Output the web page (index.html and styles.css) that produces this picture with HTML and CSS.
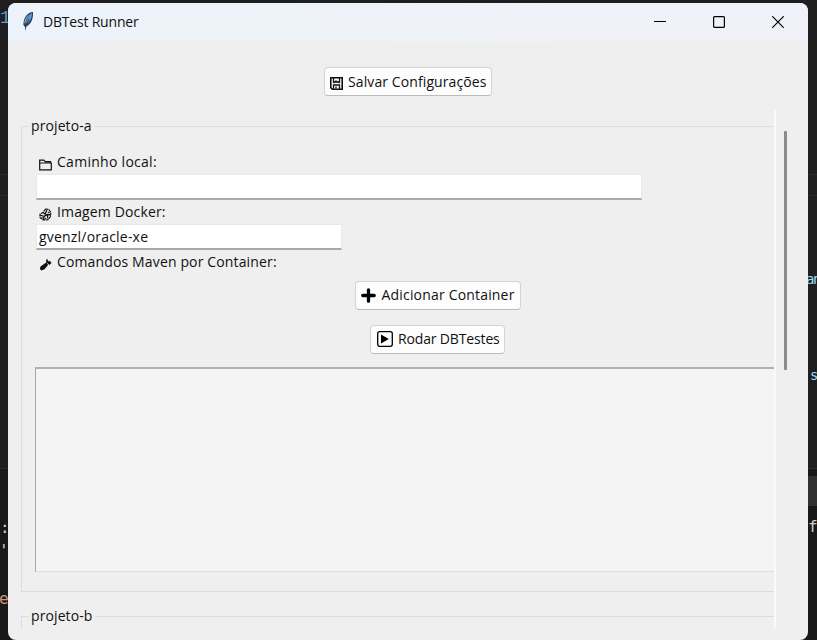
FILE: index.html
```html
<!DOCTYPE html>
<html lang="pt-BR">
<head>
<meta charset="utf-8">
<title>DBTest Runner</title>
<link rel="stylesheet" href="styles.css">
</head>
<body>
<div class="desktop">
  <div class="editor">
    <div class="band band-upper"></div>
    <div class="band band-input"></div>
    <span class="code code-one">1</span>
    <span class="code code-colon">:</span>
    <span class="code code-quote">'</span>
    <span class="code code-e">e</span>
    <span class="code code-an">an</span>
    <span class="code code-s">s</span>
    <span class="code code-f">f</span>
  </div>
  <main class="window">
    <header class="titlebar">
      <svg class="feather" width="12" height="21" viewBox="0 0 12 21"><path d="M11 1C6 1 1.500 6 1.400 14L3 16L3.400 20L4.400 15.500C9 13 11.500 8 11 1Z" fill="#343c48"/><path d="M10 2C6.500 4 4.200 8 3.500 13.800C7.800 11 10.200 7 10 2Z" fill="#5596e6"/><path d="M7.500 3C4 5 2.300 9 2.300 13L3.800 11C4 8 5.500 5.500 7.500 3Z" fill="#9aa7b5"/><path d="M7 8L4 14" stroke="#1d3c63" stroke-width="1"/></svg>
      <h1 class="title">DBTest Runner</h1>
      <div class="controls">
        <svg width="12" height="12" viewBox="0 0 12 12"><path d="M0 5.500H12" stroke="#000"/></svg>
        <svg width="12" height="12" viewBox="0 0 12 12"><rect x=".6" y=".6" width="10.800" height="10.800" rx="1" fill="none" stroke="#000" stroke-width="1.200"/></svg>
        <svg width="12" height="12" viewBox="0 0 12 12"><path d="M.3.3L11.700 11.700M11.700.3L.3 11.700" stroke="#000" stroke-width="1.200"/></svg>
      </div>
    </header>
    <div class="toolbar">
      <button class="button save"><svg width="13" height="13" viewBox="0 0 13 13"><path d="M1 .8H12.200V12.200H2.300L.8 10.700V.8Z" fill="none" stroke="#111" stroke-width="1.600"/><path d="M3.500 1V5H9.500V1M3.500 12V8H9.500V12M6 9.500V11.500M3.500 6L6 4L9.500 6" fill="none" stroke="#111" stroke-width="1.300"/></svg><span>Salvar Configurações</span></button>
    </div>
    <div class="content">
      <div class="viewport">
        <section class="group">
          <h2 class="legend legend-a">projeto-a</h2>
          <div class="label path"><svg width="13" height="13" viewBox="0 0 13 13"><path d="M.7 11.800V2.200H4.800L6.300 3.700H11.500V5M.7 5H12.300V11.800H.7Z" fill="none" stroke="#111" stroke-width="1.200"/></svg><span>Caminho local:</span></div>
          <div class="field wide"></div>
          <div class="label docker"><svg width="13" height="13" viewBox="0 0 13 13"><path d="M6.500 1L9.500 1.200L11.800 4L11.500 8.500L9 11.800L4 12L1 9.500L1 6L4 4.500Z" fill="none" stroke="#111" stroke-width="1.100" stroke-dasharray="3 .6"/><path d="M1 7L5 8.500L4.500 11.800M5 8.500L8 6.500L11.800 7M4 4.500L6 6L8 2M8 6.500L9 10.500M2.500 9.500L3.500 10.500M9 4L10.500 5M6 10L7 11" fill="none" stroke="#111" stroke-width="1.300"/></svg><span>Imagem Docker:</span></div>
          <div class="field narrow"><span>gvenzl/oracle-xe</span></div>
          <div class="label maven"><svg width="13" height="13" viewBox="0 0 13 13"><path d="M8 .8L9.300 3.300L11 3L12.500 5L10.500 7L9.500 6.500L5.500 11.300L2.500 12.600L.8 11L1.500 8.500L7.500 4.300L7 2.300Z" fill="#111"/><path d="M8 5.300L10 7" stroke="#eee" stroke-width=".8"/></svg><span>Comandos Maven por Container:</span></div>
          <div class="actions">
            <button class="button add"><svg width="16" height="15" viewBox="0 0 16 15"><path d="M8.500 1.800V13.200M2.800 7.500H14.200" stroke="#000" stroke-width="3.300" stroke-linecap="round"/></svg><span>Adicionar Container</span></button>
            <button class="button run"><svg width="16" height="16" viewBox="0 0 16 16"><rect x=".7" y=".7" width="14.600" height="14.600" rx="2" fill="none" stroke="#000" stroke-width="1.300"/><path d="M4 3.500L11.800 8L4 12.500Z" fill="#000"/></svg><span>Rodar DBTestes</span></button>
          </div>
          <div class="output"></div>
        </section>
        <section class="group next">
          <h2 class="legend legend-b">projeto-b</h2>
        </section>
      </div>
      <div class="scrollbar"><div class="thumb"></div></div>
    </div>
  </main>
</div>
</body>
</html>
```
FILE: styles.css
```css
* { box-sizing: border-box; }
body { margin: 0; overflow: hidden; }
.desktop {
  position: relative;
  width: 817px;
  height: 640px;
  padding: 3px 9px 0 8px;
  overflow: hidden;
  background: #1f1f1f;
  font-family: "Open Sans", "Noto Sans", sans-serif;
}
.editor { position: absolute; inset: 0; }
.band { position: absolute; left: 0; right: 0; }
.band-upper { top: 174px; height: 22px; border: solid #2b2b2b; border-width: 1px 0; }
.band-input { top: 468px; bottom: 0; border-top: 1px solid #2d2d2d; background: linear-gradient(90deg, #181818 50%, transparent 50%), linear-gradient(#181818 7px, #313131 7px, #313131 37px, #181818 37px); }
.code { position: absolute; font: 16px/20px "DejaVu Sans Mono", monospace; color: #ccc; }
.code-one { left: 0; top: 8px; font-family: "Liberation Mono", monospace; font-size: 18px; color: #569cd6; }
.code-colon { left: 0; top: 518px; }
.code-quote { left: -1px; top: 541px; }
.code-e { left: -1px; top: 589px; color: #ce9178; }
.code-an { left: 806px; top: 269px; font-size: 14px; letter-spacing: -1.500px; color: #9cdcfe; }
.code-s { left: 810px; top: 365px; font-size: 14px; color: #9cdcfe; }
.code-f { left: 808px; top: 517px; }
.window {
  position: relative;
  display: flex;
  flex-direction: column;
  width: 800px;
  height: 637px;
  overflow: hidden;
  border-radius: 8px;
  background: #efefef;
}
.titlebar {
  display: flex;
  flex: none;
  align-items: center;
  height: 38px;
  padding: 0 24px 0 14px;
  background: linear-gradient(90deg, #edf3fb, #eef3f8 35%, #f1f2f9 70%);
}
.feather { margin-top: -2px; }
.title { margin: 0 0 0 9px; font: 14px/20px "Open Sans", sans-serif; letter-spacing: -.2px; color: #111; white-space: nowrap; }
.controls { display: flex; gap: 47px; margin-left: auto; }
.toolbar { display: flex; flex: none; justify-content: center; height: 69px; padding-top: 26px; }
.button {
  display: flex;
  align-items: center;
  height: 29px;
  padding: 0 0 1px 5px;
  border: 1px solid #d3d3d3;
  border-bottom-color: #bcbcbc;
  border-radius: 4px;
  background: #fdfdfd;
  color: #111;
  font: 14px/20px "Open Sans", "Noto Sans", sans-serif;
  white-space: nowrap;
}
.button svg { flex: none; }
.save { width: 168px; gap: 5px; padding-bottom: 0; letter-spacing: .1px; }
.save svg { margin-top: 4px; }
.content { display: flex; height: 518px; }
.viewport { width: 768px; padding: 16px 0 0 13px; overflow: hidden; border-right: 2px solid #fafafa; }
.group { height: 466px; padding-left: 13px; border: solid #dcdcdc; border-width: 1px 0 1px 1px; }
.next { margin-top: 24px; }
.legend {
  width: max-content;
  height: 20px;
  margin: -11px 0 0 -6px;
  padding: 0 2px;
  background: #efefef;
  font: 14px/20px "Open Sans", sans-serif;
  letter-spacing: .1px;
  color: #111;
}
.label { display: flex; align-items: center; gap: 5px; height: 24px; padding-left: 4px; font-size: 14px; line-height: 22px; letter-spacing: .14px; color: #111; white-space: nowrap; }
.label svg { margin-top: 4px; }
.path { margin-top: 14px; letter-spacing: .28px; }
.field { height: 26px; margin-left: 1px; border: solid #e8e8e8; border-width: 1px 1px 2px; border-bottom-color: #a9a9a9; background: #fff; color: #111; font-size: 14px; line-height: 24px; letter-spacing: .2px; }
.field span { padding-left: 2px; }
.wide { width: 606px; }
.narrow { width: 306px; }
.actions { display: flex; flex-direction: column; align-items: center; gap: 15px; margin: 7px -66px 0 0; }
.add { width: 166px; gap: 6px; padding-left: 4px; letter-spacing: .18px; }
.run { width: 135px; gap: 5px; padding-left: 6px; letter-spacing: -.15px; }
.output { height: 205px; margin-top: 13px; border: solid #dedede; border-width: 2px 0 1px 1px; border-top-color: #b1b1b1; border-left-color: #a8a8a8; background: #f4f4f4; }
.scrollbar { width: 32px; padding: 21px 0 0 8px; }
.thumb { width: 3px; height: 239px; border-radius: 1px; background: #8b8b8b; }
```
